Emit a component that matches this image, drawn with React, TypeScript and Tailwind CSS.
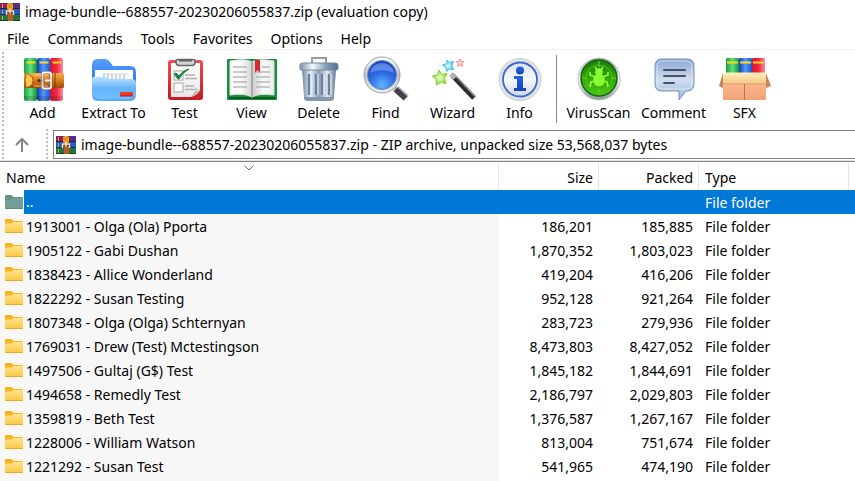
import React, { useId } from "react";

type IconProps = { className?: string };

function Canvas({ children }: { children: React.ReactNode }) {
  return (
    <svg viewBox="0 0 54 48" className="h-12 w-[54px] shrink-0" aria-hidden="true">
      {children}
    </svg>
  );
}

function Grad({ id, stops, flat = false }: { id: string; stops: string[]; flat?: boolean }) {
  return (
    <linearGradient id={id} x1="0" y1="0" x2={flat ? "1" : "0"} y2={flat ? "0" : "1"}>
      {stops.map((color, i) => (
        <stop key={i} offset={i / (stops.length - 1)} stopColor={color} />
      ))}
    </linearGradient>
  );
}

function ArchiveLogo({ className }: IconProps) {
  return (
    <svg viewBox="0 0 20 18" className={className} aria-hidden="true">
      <rect width="20" height="6" fill="#8a2458" />
      <rect x="13" width="7" height="6" fill="#5b2a7c" />
      <rect y="5" width="20" height="1" fill="#3c1640" />
      <rect y="6" width="20" height="6" fill="#2757c0" />
      <rect y="11" width="20" height="1" fill="#16306e" />
      <rect y="12" width="20" height="6" fill="#23733a" />
      <rect y="17" width="20" height="1" fill="#0f4420" />
      <path d="M2.500 1v4M2.500 7v4M2.500 13v4" stroke="#e5a62b" strokeWidth="1" />
      <rect x="7" y="6" width="7" height="6" fill="#7a4522" />
      <rect x="7" y="0" width="6" height="7" rx="2" fill="#f2a92a" />
      <path d="M8.500 2h3M8.500 4h3" stroke="#c46a12" strokeWidth=".8" />
      <rect x="8" y="11" width="5" height="7" fill="#bd5a24" />
      <path d="M6.500 12V8h7v4" fill="none" stroke="#e4e0dc" strokeWidth="1.400" />
      <path d="M10 6v5" stroke="#fff0c8" strokeWidth="1.200" />
    </svg>
  );
}

function FolderIcon({ muted = false }: { muted?: boolean }) {
  const id = useId();
  return (
    <svg viewBox="0 0 18 14" className="h-3.5 w-[18px] shrink-0" aria-hidden="true">
      <defs>
        <Grad id={id} stops={muted ? ["#6ca1a8", "#769c8b"] : ["#ffe391", "#fdc843"]} />
      </defs>
      <path d="M0 1q0-1 1-1h5.500l2 2H17q1 0 1 1v4H0z" fill={muted ? "#6a9574" : "#f8b51c"} />
      <path d="M0 4.500h6.500l2-1.500H18v11H0z" fill={`url(#${id})`} />
      <path d="M0 13.500h18" stroke={muted ? "#5f8c77" : "#e9ab29"} />
    </svg>
  );
}

function AddIcon() {
  return (
    <Canvas>
      <defs>
        <Grad id="ag" flat stops={["#15a047", "#5fe07c", "#109238"]} />
        <Grad id="ab" flat stops={["#173fae", "#4f98ff", "#1e56cf"]} />
        <Grad id="ar" flat stops={["#d0163a", "#f4263d", "#ff8aa0"]} />
        <Grad id="al" stops={["#f8b14b", "#d97a1c", "#a04a0c"]} />
        <Grad id="am" stops={["#ffffff", "#c9c2bd", "#f5f0ec"]} />
      </defs>
      <rect x="8" y="3" width="13" height="43" rx="2" fill="url(#ag)" />
      <rect x="21" y="3" width="13" height="43" rx="2" fill="url(#ab)" />
      <rect x="34" y="3" width="13" height="43" rx="2" fill="url(#ar)" />
      <path d="M10.500 7.500h9M23.500 7.500h9M36.500 7.500h9" stroke="#ffd91f" strokeWidth="2.200" />
      <path d="M8 41h39v4H8z" fill="#000" opacity=".13" />
      <rect x="8" y="18" width="40" height="15" rx="1.500" fill="url(#al)" />
      <path d="M10 18.500q7 1 7 7T10 32.500q-2-7 0-14z" fill="#ffc64b" stroke="#a75a12" />
      <path d="M39 18v15" stroke="#7d3609" />
      <path d="M18 20h14M18 31h14" stroke="#ffd28a" strokeWidth=".8" />
      <rect x="26.500" y="17.500" width="8.500" height="16" rx="2" fill="none" stroke="#6f5541" strokeWidth="3" />
      <rect x="26.500" y="17.500" width="8.500" height="16" rx="2" fill="none" stroke="url(#am)" strokeWidth="2" />
      <path d="M29 25.500h7" stroke="#f4eee8" strokeWidth="2" />
      <circle cx="23" cy="25.500" r="1.600" fill="#5c2808" />
    </Canvas>
  );
}

function ExtractIcon() {
  return (
    <Canvas>
      <defs>
        <Grad id="eb" stops={["#559dff", "#2863ee"]} />
        <Grad id="ef" stops={["#b8e2ff", "#65b3fa", "#74c2ff"]} />
      </defs>
      <path d="M5 10q0-6 6-6h7q3 0 5 3l3 4h17q6 0 6 6v23H5z" fill="url(#eb)" />
      <rect x="8" y="15" width="38" height="20" fill="#fbfcfe" />
      <path d="M16 19h25" stroke="#d3d9e2" strokeWidth="1" />
      <path d="M17 19v7M21 19v7M25 19v7M29 19v7M33 19v7M37 19v7" stroke="#b4bdca" strokeWidth="1.200" />
      <path d="M5 25q0-4 4-3h8q3 0 5 2h22q5 0 5 4v12q0 6-6 6H11q-6 0-6-6z" fill="url(#ef)" />
      <path d="M6 41q1 4 6 4h30q5 0 6-4" fill="none" stroke="#4195e9" />
      <rect x="33" y="37" width="13" height="4" rx=".8" fill="#e83b24" />
      <path d="M33 41h13" stroke="#a82113" />
    </Canvas>
  );
}

function TestIcon() {
  return (
    <Canvas>
      <defs>
        <Grad id="tr" stops={["#ef4d50", "#c41b22"]} />
        <Grad id="tp" stops={["#ffffff", "#e7e7e7"]} />
      </defs>
      <rect x="10" y="5" width="35" height="40" rx="3" fill="url(#tr)" />
      <path d="M13 8h29v27q-2 5-9 7H13z" fill="url(#tp)" />
      <path d="M32 42q3-1 4-5 3 0 6-3-2 6-10 8z" fill="#b9b9b9" />
      <path d="M18 6.500q0 4 3 4h13q3 0 3-4v-1q0-1-2-1H20q-2 0-2 1z" fill="#d3d6d9" stroke="#6c6366" strokeWidth="1.500" />
      <path d="M21 5.500h13" stroke="#675e62" strokeWidth="2" />
      <rect x="16" y="16" width="9" height="9" fill="#fafafa" stroke="#aaa" />
      <rect x="16" y="28" width="9" height="9" fill="#fafafa" stroke="#aaa" />
      <path d="m16 19 2-1 3 3q4-6 10-7-7 4-10 10h-1z" fill="#14883c" stroke="#14883c" />
      <path d="M27 20h10M27 23.500h12M27 31h9M27 34.500h12" stroke="#b7b0b0" strokeWidth="1.400" />
    </Canvas>
  );
}

function ViewIcon() {
  return (
    <Canvas>
      <defs>
        <Grad id="vl" flat stops={["#fff", "#fbfbfb", "#d2d2d2"]} />
        <Grad id="vr" flat stops={["#c8c8c8", "#fafafa", "#ececec"]} />
      </defs>
      <rect x="2" y="4" width="50" height="41" rx="1" fill="#15913b" />
      <path d="M4 43h46" stroke="#07551f" strokeWidth="2" />
      <path d="M5 6q16-3 22 1v35q-7-4-22-2z" fill="url(#vl)" stroke="#d7ddd5" />
      <path d="M49 6q-16-3-22 1v35q7-4 22-2z" fill="url(#vr)" stroke="#d7ddd5" />
      <path d="M8 12h14M8 17h14M8 22h14M8 27h14M8 32h14M31 17h14M31 22h14M31 27h14M31 32h14M37 12h8" stroke="#b9b9b9" strokeWidth="1.300" />
      <path d="M27 7v36" stroke="#8a8a8a" strokeWidth="1.200" />
      <path d="M30 5h5v13l-2.500-3-2.500 3z" fill="#d72b30" />
    </Canvas>
  );
}

function DeleteIcon() {
  return (
    <Canvas>
      <defs>
        <Grad id="db" flat stops={["#72869e", "#e6eef6", "#8a9eb5", "#e0e8f0", "#61768f"]} />
        <Grad id="dl" flat stops={["#7c93ad", "#f5faff", "#8ca3bb", "#536b85"]} />
      </defs>
      <path d="M20 8V3h14v5" fill="none" stroke="#8e9daf" strokeWidth="2" />
      <path d="M10 14h34l-2 28q0 4-4 4H16q-4 0-4-4z" fill="url(#db)" />
      <path d="M17 19v21M24 19v21M30 19v21M37 19v21" stroke="#6b8199" strokeWidth="2.400" />
      <path d="M19 19v21M26 19v21M32 19v21M39 19v21" stroke="#eaf2fa" strokeWidth="1" />
      <path d="M12 42q0 4 4 4h22q4 0 4-4z" fill="#8397ad" />
      <path d="M8 10q0-2 3-2h32q3 0 3 2v4q0 1-2 1H10q-2 0-2-1z" fill="url(#dl)" stroke="#758aa2" />
    </Canvas>
  );
}

function FindIcon() {
  return (
    <Canvas>
      <defs>
        <radialGradient id="fb" cx=".5" cy=".85" r=".8">
          <stop offset="0" stopColor="#62b5ff" />
          <stop offset=".5" stopColor="#3170e9" />
          <stop offset="1" stopColor="#1741bc" />
        </radialGradient>
        <Grad id="fs" stops={["#ffffff", "#bcc3ca", "#edf0f3"]} />
      </defs>
      <path d="m34 32 6 5" stroke="#b9bcc2" strokeWidth="5" />
      <path d="m37 34 10 9" stroke="#444048" strokeWidth="7" />
      <path d="m39 32 10 9" stroke="#bcbac1" strokeWidth="1.600" />
      <circle cx="23" cy="20" r="18" fill="url(#fs)" stroke="#98a2aa" />
      <circle cx="23" cy="20" r="14.500" fill="url(#fb)" stroke="#7489b2" />
      <path d="M11 18q2-10 12-10t12 10q-12-6-24 0z" fill="#91b9ff" opacity=".5" />
    </Canvas>
  );
}

function WizardIcon() {
  return (
    <Canvas>
      <defs>
        <radialGradient id="wg">
          <stop offset="0" stopColor="#f4ffd9" />
          <stop offset="1" stopColor="#84dc2c" />
        </radialGradient>
        <radialGradient id="wb">
          <stop offset="0" stopColor="#f0feff" />
          <stop offset="1" stopColor="#43c9ea" />
        </radialGradient>
      </defs>
      <path d="m26 20 22 23" stroke="#2c2c2c" strokeWidth="5" />
      <path d="m27.500 19 22 23" stroke="#8d8d8d" strokeWidth="1.200" />
      <path d="m25 19 4 4" stroke="#b1b1b1" strokeWidth="5" />
      <path d="m13 15 2.500 4.500 5.500-1-2.500 5 1.500 5.500-5-2-4.500 3-.500-5.500-3.500-3.500 5-1z" fill="url(#wg)" stroke="#7ed32c" />
      <path d="m21 5 2.500 2.500 4-1-1.500 4 1.500 4-4-.500-3 2.500-.500-4-3.500-2.500 4-1z" fill="url(#wb)" stroke="#3cc4e6" />
      <path d="m34 4 1.200 2.400 2.700.2-2 2 .5 2.700-2.400-1.300-2.400 1.300.5-2.700-2-2 2.700-.4z" fill="#ffd3d2" stroke="#f18a8a" />
    </Canvas>
  );
}

function InfoIcon() {
  return (
    <Canvas>
      <defs>
        <Grad id="ib" stops={["#2466ea", "#1740b6"]} />
        <Grad id="ig" stops={["#dce2e8", "#f6f8fa", "#ced7df"]} />
      </defs>
      <circle cx="27" cy="24.500" r="21" fill="#dfe4ea" stroke="#c6ced6" />
      <circle cx="27" cy="24.500" r="17" fill="url(#ig)" stroke="#3f66cc" strokeWidth="1.800" />
      <circle cx="27" cy="15.500" r="4" fill="url(#ib)" />
      <path d="M21 21h9v12h3v3H21v-3h3v-9h-3z" fill="url(#ib)" />
    </Canvas>
  );
}

function VirusIcon() {
  return (
    <Canvas>
      <defs>
        <Grad id="vs" stops={["#8e959f", "#f5f7fa", "#8e959c"]} />
        <Grad id="vb" stops={["#168209", "#33a608", "#48ca13"]} />
      </defs>
      <circle cx="27" cy="24" r="21" fill="url(#vs)" stroke="#c0c5ca" />
      <circle cx="27" cy="23" r="18" fill="url(#vb)" stroke="#15650f" strokeWidth="1.500" />
      <circle cx="27" cy="23" r="13" fill="none" stroke="#4fbf25" strokeWidth="1" />
      <path d="M27 6v6M27 34v6M10 23h5M39 23h5" stroke="#62cf30" strokeWidth="1.200" />
      <g fill="#8aff36" stroke="#8aff36" strokeWidth="1.600">
        <circle cx="27" cy="17" r="3" />
        <ellipse cx="27" cy="25" rx="5" ry="5.500" />
        <path d="m25 15-2-3M29 15l2-3M23 22l-5-2v-3M31 22l5-2v-3M23 26l-4 1-1 5M31 26l4 1 1 5" fill="none" />
      </g>
    </Canvas>
  );
}

function CommentIcon() {
  return (
    <Canvas>
      <defs>
        <Grad id="cb" stops={["#88a5d1", "#d1def0", "#9bb6d8"]} />
      </defs>
      <path d="M15 4h25q7 0 7 7v18q0 7-7 7h-1l-7 9v-9H15q-7 0-7-7V11q0-7 7-7z" fill="url(#cb)" stroke="#7891b8" />
      <path d="M15 6h24q6 0 6 6v16q0 6-6 6H16q-6 0-6-6V12q0-6 5-6z" fill="none" stroke="#dfebfa" opacity=".8" />
      <path d="M17 15h21M17 21h21M17 28h10" stroke="#485368" strokeWidth="2" strokeLinecap="round" />
    </Canvas>
  );
}

function SfxIcon() {
  return (
    <Canvas>
      <defs>
        <Grad id="sx" stops={["#ffc299", "#f0a478"]} />
        <Grad id="sf" stops={["#fff0bd", "#f5c889"]} />
      </defs>
      <rect x="8" y="3" width="13" height="17" rx="1" fill="url(#ag)" />
      <rect x="21" y="3" width="13" height="17" rx="1" fill="url(#ab)" />
      <rect x="34" y="3" width="13" height="17" rx="1" fill="url(#ar)" />
      <path d="M9 7.500h11M22 7.500h11M35 7.500h11" stroke="#ffd91f" strokeWidth="2" />
      <path d="M5 18 1 31l4 2zM48 18l5 13-5 2z" fill="#c98558" />
      <path d="M5 18h43v27H5z" fill="url(#sx)" />
      <path d="M5 17.500h43v11H5z" fill="url(#sf)" />
      <path d="M5 29h43" stroke="#db9b6b" />
      <path d="M26.500 29v16" stroke="#b57450" />
    </Canvas>
  );
}

const tools = [
  { label: "Add", Icon: AddIcon, width: "w-[67px]" },
  { label: "Extract To", Icon: ExtractIcon, width: "w-[75px]" },
  { label: "Test", Icon: TestIcon, width: "w-[67px]" },
  { label: "View", Icon: ViewIcon, width: "w-[67px]" },
  { label: "Delete", Icon: DeleteIcon, width: "w-[67px]" },
  { label: "Find", Icon: FindIcon, width: "w-[67px]" },
  { label: "Wizard", Icon: WizardIcon, width: "w-[67px]" },
  { label: "Info", Icon: InfoIcon, width: "w-[67px]" },
];

const extraTools = [
  { label: "VirusScan", Icon: VirusIcon, width: "w-[75px]" },
  { label: "Comment", Icon: CommentIcon, width: "w-[75px]" },
  { label: "SFX", Icon: SfxIcon, width: "w-[67px]" },
];

const menus = ["File", "Commands", "Tools", "Favorites", "Options", "Help"];

const rows = [
  ["1913001 - Olga (Ola) Pporta", "186,201", "185,885"],
  ["1905122 - Gabi Dushan", "1,870,352", "1,803,023"],
  ["1838423 - Allice Wonderland", "419,204", "416,206"],
  ["1822292 - Susan Testing", "952,128", "921,264"],
  ["1807348 - Olga (Olga) Schternyan", "283,723", "279,936"],
  ["1769031 - Drew (Test) Mctestingson", "8,473,803", "8,427,052"],
  ["1497506 - Gultaj (G$) Test", "1,845,182", "1,844,691"],
  ["1494658 - Remedly Test", "2,186,797", "2,029,803"],
  ["1359819 - Beth Test", "1,376,587", "1,267,167"],
  ["1228006 - William Watson", "813,004", "751,674"],
  ["1221292 - Susan Test", "541,965", "474,190"],
];

function Grip() {
  return (
    <div className="w-0.5 shrink-0 self-stretch bg-[repeating-linear-gradient(to_bottom,#bdbdbd_0_2px,transparent_2px_4px)]" />
  );
}

function ToolButton({ label, Icon, width }: { label: string; Icon: () => React.ReactNode; width: string }) {
  return (
    <button type="button" className={`flex shrink-0 flex-col items-center ${width}`}>
      <Icon />
      <span className="leading-5 whitespace-nowrap">{label}</span>
    </button>
  );
}

export default function App() {
  return (
    <div className="flex min-h-screen flex-col overflow-hidden bg-white font-['Noto_Sans','Open_Sans',sans-serif] text-sm leading-5 text-black">
      <header>
        <div className="flex h-6 items-center gap-[5px]">
          <ArchiveLogo className="h-[18px] w-5 shrink-0" />
          <h1 className="whitespace-nowrap">image-bundle--688557-20230206055837.zip (evaluation copy)</h1>
        </div>
        <nav className="flex h-[26px] items-center gap-[18px] border-b border-[#f0f0f0] pt-1 pl-[7px]">
          {menus.map((menu) => (
            <button key={menu} type="button">{menu}</button>
          ))}
        </nav>
      </header>

      <div role="toolbar" aria-label="Archive tools" className="flex h-[77px] shrink-0 pt-0.5 pl-0.5">
        <Grip />
        <div className="flex items-start pt-[3px] pl-[5px]">
          {tools.map((tool) => <ToolButton key={tool.label} {...tool} />)}
          <div className="mx-[3px] h-[68px] w-px shrink-0 bg-[#8a8a8a]" />
          <div className="flex pl-px">
            {extraTools.map((tool) => <ToolButton key={tool.label} {...tool} />)}
          </div>
        </div>
      </div>

      <div className="shrink-0 border-b border-[#84848c]">
        <div className="flex h-[34px] border-b border-[#e3e3e3] pt-0.5 pl-0.5">
          <Grip />
          <button type="button" aria-label="Up one level" className="flex w-[42px] items-center justify-center pr-1.5 text-[#858585]">
            <svg viewBox="0 0 16 16" className="size-4" fill="none" stroke="currentColor" strokeWidth="2" aria-hidden="true">
              <path d="M8 15V2M2 8l6-6 6 6" />
            </svg>
          </button>
          <Grip />
          <label className="mt-px ml-[5px] flex h-[29px] grow items-center gap-[5px] border-y border-l border-[#7f7f87] pl-0.5">
            <ArchiveLogo className="h-[18px] w-5 shrink-0" />
            <input
              readOnly
              aria-label="Archive path"
              className="h-6 min-w-0 grow bg-transparent outline-none"
              value="image-bundle--688557-20230206055837.zip - ZIP archive, unpacked size 53,568,037 bytes"
            />
          </label>
        </div>
      </div>

      <table className="mt-px w-full table-fixed border-separate border-spacing-0 text-left">
        <colgroup>
          <col className="w-[499px]" />
          <col className="w-[100px]" />
          <col className="w-[100px]" />
          <col className="w-[150px]" />
          <col />
        </colgroup>
        <thead>
          <tr className="h-[27px]">
            <th className="relative border-r border-[#e5e5e5] p-0 pt-0.5 pl-1.5 font-normal">
              Name
              <svg viewBox="0 0 10 6" className="absolute top-0.5 left-1/2 h-1.5 w-2.5 -translate-x-1/2" fill="none" stroke="#666" aria-hidden="true">
                <path d="m.5.500 4.500 4.500L9.500.500" />
              </svg>
            </th>
            <th className="border-r border-[#e5e5e5] p-0 pt-0.5 pr-[5px] text-right font-normal">Size</th>
            <th className="border-r border-[#e5e5e5] p-0 pt-0.5 pr-[5px] text-right font-normal">Packed</th>
            <th className="border-r border-[#e5e5e5] p-0 pt-0.5 pl-1.5 font-normal">Type</th>
            <th className="p-0" />
          </tr>
        </thead>
        <tbody>
          <tr aria-selected="true" className="h-6 text-white">
            <td className="bg-[#f7f7f7] p-0">
              <div className="flex h-6">
                <div className="flex w-6 shrink-0 items-center bg-white pl-[5px]"><FolderIcon muted /></div>
                <span className="grow bg-[#0078d7] pt-0.5 pl-[2px]">..</span>
              </div>
            </td>
            <td className="bg-[#0078d7] p-0" />
            <td className="bg-[#0078d7] p-0" />
            <td className="bg-[#0078d7] p-0 pt-0.5 pl-1.5">File folder</td>
            <td className="bg-[#0078d7] p-0" />
          </tr>
          {rows.map(([name, size, packed]) => (
            <tr key={name} className="h-6">
              <td className="bg-[#f7f7f7] p-0 pl-[5px]">
                <div className="flex h-6 items-center gap-[3px]">
                  <FolderIcon />
                  <span className="pt-0.5">{name}</span>
                </div>
              </td>
              <td className="p-0 pt-0.5 pr-1.5 text-right">{size}</td>
              <td className="p-0 pt-0.5 pr-1.5 text-right">{packed}</td>
              <td className="p-0 pt-0.5 pl-1.5">File folder</td>
              <td className="p-0" />
            </tr>
          ))}
        </tbody>
      </table>
      <div className="w-[499px] grow bg-[#f7f7f7]" />
    </div>
  );
}
